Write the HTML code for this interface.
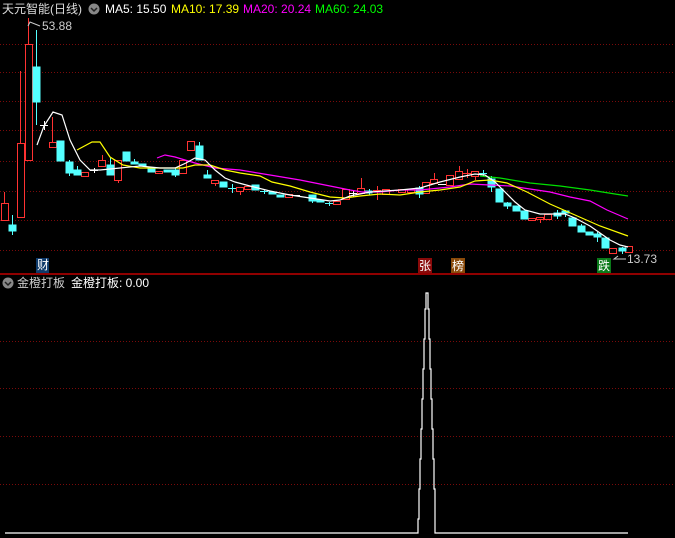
<!DOCTYPE html>
<html><head><meta charset="utf-8"><style>
body{margin:0;background:#000;width:675px;height:538px;overflow:hidden;font-family:"Liberation Sans","Noto Sans CJK SC",sans-serif}
svg{position:absolute;left:0;top:0}
.t{position:absolute;font-size:12px;white-space:nowrap;line-height:14px}
</style></head><body>
<svg width="675" height="538" xmlns="http://www.w3.org/2000/svg">
<g stroke="#7a0a0a" stroke-width="1" stroke-dasharray="1,2">
<line x1="0" y1="44.5" x2="675" y2="44.5"/><line x1="0" y1="72.5" x2="675" y2="72.5"/><line x1="0" y1="101.5" x2="675" y2="101.5"/><line x1="0" y1="130.5" x2="675" y2="130.5"/><line x1="0" y1="161.5" x2="675" y2="161.5"/><line x1="0" y1="191.5" x2="675" y2="191.5"/><line x1="0" y1="220.5" x2="675" y2="220.5"/><line x1="0" y1="250.5" x2="675" y2="250.5"/>
<line x1="0" y1="341.5" x2="675" y2="341.5"/><line x1="0" y1="388.5" x2="675" y2="388.5"/><line x1="0" y1="436.5" x2="675" y2="436.5"/><line x1="0" y1="484.5" x2="675" y2="484.5"/>
</g>
<line x1="0" y1="274" x2="675" y2="274" stroke="#c00000" stroke-width="1.5"/>
<!-- red candles -->
<g stroke="#ff3232" fill="#000" stroke-width="1">
<line x1="4.5" y1="192" x2="4.5" y2="203"/><rect x="1.5" y="203.5" width="7" height="17"/>
<line x1="20.5" y1="71" x2="20.5" y2="143"/><rect x="17.5" y="143.5" width="7" height="74"/>
<line x1="28.5" y1="18" x2="28.5" y2="44"/><rect x="25.5" y="44.5" width="7" height="116"/>
<line x1="52.5" y1="117" x2="52.5" y2="142"/><rect x="49.5" y="142.5" width="7" height="5"/>
<rect x="81.5" y="172.5" width="7" height="4"/>
<line x1="102.5" y1="155" x2="102.5" y2="160"/><rect x="98.5" y="160.5" width="7" height="6"/>
<rect x="114.5" y="160.5" width="7" height="20"/><line x1="118.5" y1="181" x2="118.5" y2="183"/>
<rect x="155.5" y="171.5" width="7" height="2"/>
<rect x="179.5" y="160.5" width="7" height="13"/>
<rect x="187.5" y="141.5" width="7" height="9"/>
<rect x="211.5" y="180.5" width="7" height="3"/><line x1="215.5" y1="184" x2="215.5" y2="186"/>
<rect x="236.5" y="187.5" width="7" height="4"/><line x1="240.5" y1="191" x2="240.5" y2="195"/>
<rect x="244.5" y="186.5" width="7" height="3"/>
<rect x="285.5" y="194.5" width="7" height="3"/>
<rect x="333.5" y="201.5" width="7" height="3"/>
<rect x="342.5" y="189.5" width="7" height="10"/>
<line x1="361.5" y1="178" x2="361.5" y2="188"/><rect x="357.5" y="188.5" width="7" height="5"/>
<line x1="373" y1="190.5" x2="381" y2="190.5"/><line x1="377.5" y1="186" x2="377.5" y2="200"/>
<rect x="382.5" y="189.5" width="7" height="5"/>
<line x1="390" y1="190.5" x2="398" y2="190.5"/>
<rect x="398.5" y="189.5" width="7" height="3"/>
<rect x="407.5" y="189.5" width="7" height="3"/>
<rect x="422.5" y="182.5" width="7" height="11"/>
<line x1="434.5" y1="173" x2="434.5" y2="179"/><rect x="430.5" y="179.5" width="7" height="4"/>
<rect x="446.5" y="175.5" width="7" height="10"/>
<line x1="459.5" y1="166" x2="459.5" y2="171"/><rect x="455.5" y="171.5" width="7" height="8"/>
<line x1="463" y1="173.5" x2="471" y2="173.5"/><line x1="467.5" y1="169" x2="467.5" y2="178"/>
<rect x="471.5" y="171.5" width="7" height="5"/><line x1="475.5" y1="177" x2="475.5" y2="180"/>
<rect x="528.5" y="218.5" width="7" height="2"/>
<rect x="536.5" y="217.5" width="7" height="2"/><line x1="540.5" y1="220" x2="540.5" y2="223"/>
<rect x="544.5" y="214.5" width="7" height="5"/>
<rect x="609.5" y="248.5" width="7" height="5"/>
<rect x="625.5" y="246.5" width="7" height="6"/>
</g>
<!-- cyan candles -->
<g fill="#54ffff" stroke="#54ffff" stroke-width="1">
<line x1="12.5" y1="215" x2="12.5" y2="235"/><rect x="9" y="225" width="7" height="6"/>
<line x1="36.5" y1="30" x2="36.5" y2="125"/><rect x="33" y="67" width="7" height="35"/>
<rect x="57" y="141" width="7" height="20"/>
<line x1="69.5" y1="160" x2="69.5" y2="176"/><rect x="66" y="162" width="7" height="11"/>
<line x1="77.5" y1="166" x2="77.5" y2="170"/><rect x="74" y="170" width="7" height="5"/>
<line x1="110.5" y1="158" x2="110.5" y2="175"/><rect x="107" y="165" width="7" height="10"/>
<rect x="123" y="152" width="7" height="9"/>
<line x1="134.5" y1="159" x2="134.5" y2="164"/><rect x="131" y="162" width="7" height="2"/>
<rect x="139" y="164" width="7" height="2"/>
<rect x="148" y="168" width="7" height="4"/>
<rect x="164" y="170" width="7" height="2"/>
<line x1="175.5" y1="168" x2="175.5" y2="177"/><rect x="172" y="170" width="7" height="5"/>
<line x1="199.5" y1="142" x2="199.5" y2="146"/><rect x="196" y="146" width="7" height="14"/>
<line x1="207.5" y1="170" x2="207.5" y2="175"/><rect x="204" y="175" width="7" height="3"/>
<rect x="220" y="182" width="7" height="5"/>
<line x1="228" y1="188.5" x2="236" y2="188.5"/><line x1="232.5" y1="184" x2="232.5" y2="193"/>
<rect x="252" y="185" width="7" height="5"/>
<line x1="260" y1="191.5" x2="268" y2="191.5"/><line x1="264.5" y1="190" x2="264.5" y2="194"/>
<rect x="269" y="192" width="7" height="2"/>
<rect x="277" y="195" width="7" height="2"/>
<rect x="309" y="195" width="7" height="6"/><line x1="312.5" y1="201" x2="312.5" y2="203"/>
<rect x="317" y="200" width="7" height="2"/>
<line x1="325" y1="203.5" x2="333" y2="203.5"/><line x1="329.5" y1="202" x2="329.5" y2="206"/>
<rect x="365" y="191" width="7" height="2"/><line x1="369.5" y1="189" x2="369.5" y2="195"/>
<line x1="419.5" y1="186" x2="419.5" y2="198"/><rect x="416" y="188" width="7" height="6"/>
<line x1="479" y1="173.5" x2="487" y2="173.5"/><line x1="483.5" y1="170" x2="483.5" y2="177"/>
<line x1="491.5" y1="176" x2="491.5" y2="192"/><rect x="488" y="179" width="7" height="8"/>
<rect x="496" y="189" width="7" height="13"/>
<line x1="507.5" y1="202" x2="507.5" y2="209"/><rect x="504" y="203" width="7" height="3"/>
<rect x="513" y="206" width="7" height="5"/>
<rect x="521" y="211" width="7" height="8"/>
<line x1="557.5" y1="210" x2="557.5" y2="219"/><rect x="554" y="213" width="7" height="3"/>
<line x1="565.5" y1="210" x2="565.5" y2="217"/><rect x="562" y="211" width="7" height="2"/>
<rect x="569" y="218" width="7" height="8"/>
<line x1="581.5" y1="224" x2="581.5" y2="232"/><rect x="578" y="226" width="7" height="6"/>
<rect x="586" y="232" width="7" height="3"/>
<line x1="597.5" y1="232" x2="597.5" y2="242"/><rect x="594" y="234" width="7" height="3"/>
<rect x="602" y="238" width="7" height="10"/>
<line x1="622.5" y1="247" x2="622.5" y2="254"/><rect x="619" y="248" width="7" height="3"/>
</g>
<g stroke="#fff" stroke-width="1">
<line x1="40" y1="125.5" x2="48" y2="125.5"/><line x1="44.5" y1="121" x2="44.5" y2="130"/>
<line x1="90" y1="170.5" x2="98" y2="170.5"/><line x1="94.5" y1="168" x2="94.5" y2="173"/>
<line x1="292" y1="195.5" x2="300" y2="195.5"/><line x1="349" y1="193.5" x2="357" y2="193.5"/><line x1="353.5" y1="190" x2="353.5" y2="197"/>
<line x1="438" y1="184.5" x2="446" y2="184.5"/>
</g>
<!-- MA lines -->
<g fill="none" stroke-width="1.2">
<polyline stroke="#00e000" points="480,176 500,178 530,183 560,186 590,190 615,194 628,196"/>
<polyline stroke="#ff00ff" points="157,158 165,155 175,157 185,160 195,163 215,168 240,170 270,175 300,180 330,186 350,190 362,192 380,192 400,190 420,190 450,187 470,184 490,185 510,186 530,189 550,192 570,197 590,201 607,210 628,219"/>
<polyline stroke="#ffff00" points="77,150 92,142 100,142 110,157 123,165 140,168 183,168 195,165 210,165 225,170 240,173 260,176 272,182 290,186 310,192 330,197 345,198 360,196 380,194 400,195 420,192 440,190 460,187 475,181 490,180 507,183 527,192 550,204 575,215 600,226 628,236"/>
<polyline stroke="#ffffff" points="37,145 44,126 53,112 62,115 70,140 80,160 90,170 100,170 120,168 140,166 160,168 175,168 186,163 195,158 205,160 215,170 225,178 235,182 250,186 270,191 290,195 310,198 330,201 340,200 350,196 370,192 400,190 420,188 440,182 460,177 475,174 485,175 495,182 505,192 515,202 525,210 540,214 565,214 575,218 590,226 600,233 610,240 620,245 628,247"/>
</g>
<!-- annotations -->
<polyline points="40,26 30,22 28,26" fill="none" stroke="#ccc" stroke-width="1"/>
<polyline points="626,259 614,259 618,256" fill="none" stroke="#ccc" stroke-width="1"/>
<rect x="36" y="258" width="13" height="15" fill="#0e3a6a"/>
<rect x="418" y="258" width="14" height="15" fill="#8a0a0a"/>
<rect x="451" y="258" width="14" height="15" fill="#8a4a0a"/>
<rect x="597" y="258" width="14" height="15" fill="#0a7a1a"/>
<!-- indicator -->
<polyline fill="none" stroke="#fff" stroke-width="1.2" points="5,533 418,533 418,519 419,519 419,489 420,489 420,459 421,459 421,429 422,429 422,399 423,399 423,369 424,369 424,339 425,339 425,309 426,309 426,293 428,293 428,309 429,309 429,339 430,339 430,369 431,369 431,399 432,399 432,429 433,429 433,459 434,459 434,489 435,489 435,533 628,533"/>
<circle cx="94" cy="9" r="5.5" fill="#888"/><polyline points="91,8 94,11 97,8" fill="none" stroke="#222" stroke-width="1.5"/>
<circle cx="8" cy="283" r="5.5" fill="#888"/><polyline points="5,282 8,285 11,282" fill="none" stroke="#222" stroke-width="1.5"/>
</svg>
<div class="t" style="left:2px;top:2px;color:#ddd">天元智能(日线)</div>
<div class="t" style="left:105px;top:2px;color:#fff">MA5: 15.50</div>
<div class="t" style="left:171px;top:2px;color:#ffff00">MA10: 17.39</div>
<div class="t" style="left:243px;top:2px;color:#ff00ff">MA20: 20.24</div>
<div class="t" style="left:315px;top:2px;color:#00ff00">MA60: 24.03</div>
<div class="t" style="left:42px;top:19px;color:#ccc">53.88</div>
<div class="t" style="left:627px;top:252px;color:#ccc">13.73</div>
<div class="t" style="left:37px;top:258px;color:#fff">财</div>
<div class="t" style="left:419px;top:259px;color:#fff">张</div>
<div class="t" style="left:452px;top:259px;color:#fff">榜</div>
<div class="t" style="left:598px;top:259px;color:#fff">跌</div>
<div class="t" style="left:17px;top:276px;color:#ccc">金橙打板</div>
<div class="t" style="left:71px;top:276px;color:#fff">金橙打板: 0.00</div>
</body></html>
